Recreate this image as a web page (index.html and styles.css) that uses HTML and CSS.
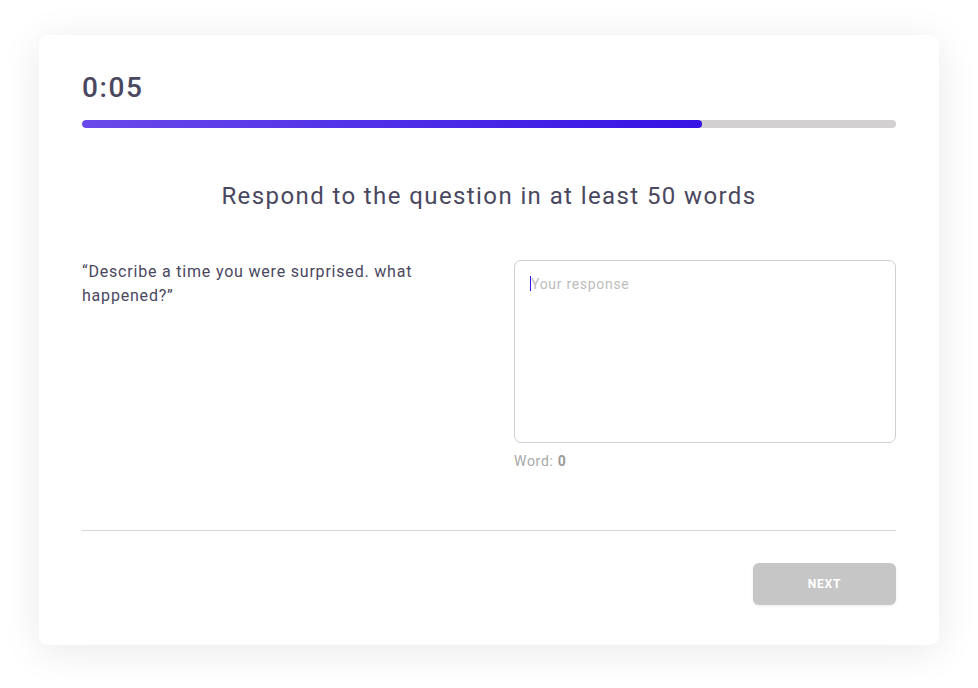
FILE: index.html
```html
<!DOCTYPE html>
<html lang="en">
<head>
<meta charset="utf-8">
<title>Writing question</title>
<link rel="stylesheet" href="styles.css">
</head>
<body>
<main class="card">
  <div class="timer">0:05</div>
  <div class="progress"><div class="progress-fill" style="width: 76.2%"></div></div>
  <h1 class="title">Respond to the question in at least 50 words</h1>
  <section class="qa">
    <p class="question">“Describe a time you were surprised. what happened?”</p>
    <div class="answer">
      <div class="field">
        <span class="caret"></span>
        <textarea class="response" placeholder="Your response"></textarea>
      </div>
      <div class="count">Word: <b>0</b></div>
    </div>
  </section>
  <hr class="divider">
  <div class="actions">
    <button class="next" type="button">NEXT</button>
  </div>
</main>
</body>
</html>
```
FILE: styles.css
```css
html, body {
  margin: 0;
  padding: 0;
  background: #ffffff;
}
body {
  font-family: Roboto, "Liberation Sans", sans-serif;
  color: #4a4760;
  padding: 35px 39px;
}
.card {
  width: 900px;
  height: 610px;
  box-sizing: border-box;
  background: #fff;
  border-radius: 9px;
  box-shadow: 0 6px 40px rgba(0, 0, 0, 0.09);
  padding: 36px 43px 0;
  display: flex;
  flex-direction: column;
}
.timer {
  font-size: 28px;
  font-weight: 500;
  line-height: 34px;
  color: #4a4760;
  letter-spacing: 1.6px;
}
.progress {
  margin-top: 15px;
  height: 8px;
  border-radius: 4px;
  background: #d3d0d1;
  overflow: hidden;
}
.progress-fill {
  height: 100%;
  border-radius: 4px;
  background: linear-gradient(90deg, #6a4ae9 0%, #5131e8 45%, #3712e4 100%);
}
.title {
  margin: 52px 0 0;
  text-align: center;
  font-size: 24px;
  font-weight: 400;
  line-height: 32px;
  color: #4a4760;
  letter-spacing: 1.4px;
}
.qa {
  margin-top: 48px;
  display: grid;
  grid-template-columns: 360px 382px;
  justify-content: space-between;
}
.question {
  margin: 0;
  font-size: 16px;
  line-height: 24px;
  color: #4a4760;
  letter-spacing: 0.8px;
}
.answer {
  display: flex;
  flex-direction: column;
}
.field {
  position: relative;
}
.response {
  display: block;
  width: 382px;
  height: 183px;
  box-sizing: border-box;
  border: 1px solid #cfcfcf;
  border-radius: 7px;
  padding: 13px 16px;
  resize: none;
  font-family: inherit;
  font-size: 14px;
  line-height: 20px;
  color: #4a4760;
  outline: none;
  letter-spacing: 0.7px;
}
.response::placeholder {
  color: #bdbdbd;
}
.caret {
  position: absolute;
  left: 16px;
  top: 16px;
  width: 1px;
  height: 15px;
  background: #3712e4;
}
.count {
  margin-top: 9px;
  font-size: 14px;
  line-height: 18px;
  color: #a9a9a9;
  letter-spacing: 0.7px;
}
.count b {
  color: #9a9a9a;
  font-weight: 700;
}
.divider {
  margin: 60px 0 0;
  border: 0;
  border-top: 1px solid #d6d6d6;
  height: 0;
}
.actions {
  margin-top: 32px;
  display: flex;
  justify-content: flex-end;
}
.next {
  width: 143px;
  height: 42px;
  border: 0;
  border-radius: 6px;
  background: #c6c6c6;
  color: #fff;
  font-family: inherit;
  font-size: 12px;
  font-weight: 700;
  letter-spacing: 0.8px;
  box-shadow: 0 1px 3px rgba(0, 0, 0, 0.08);
}
```
